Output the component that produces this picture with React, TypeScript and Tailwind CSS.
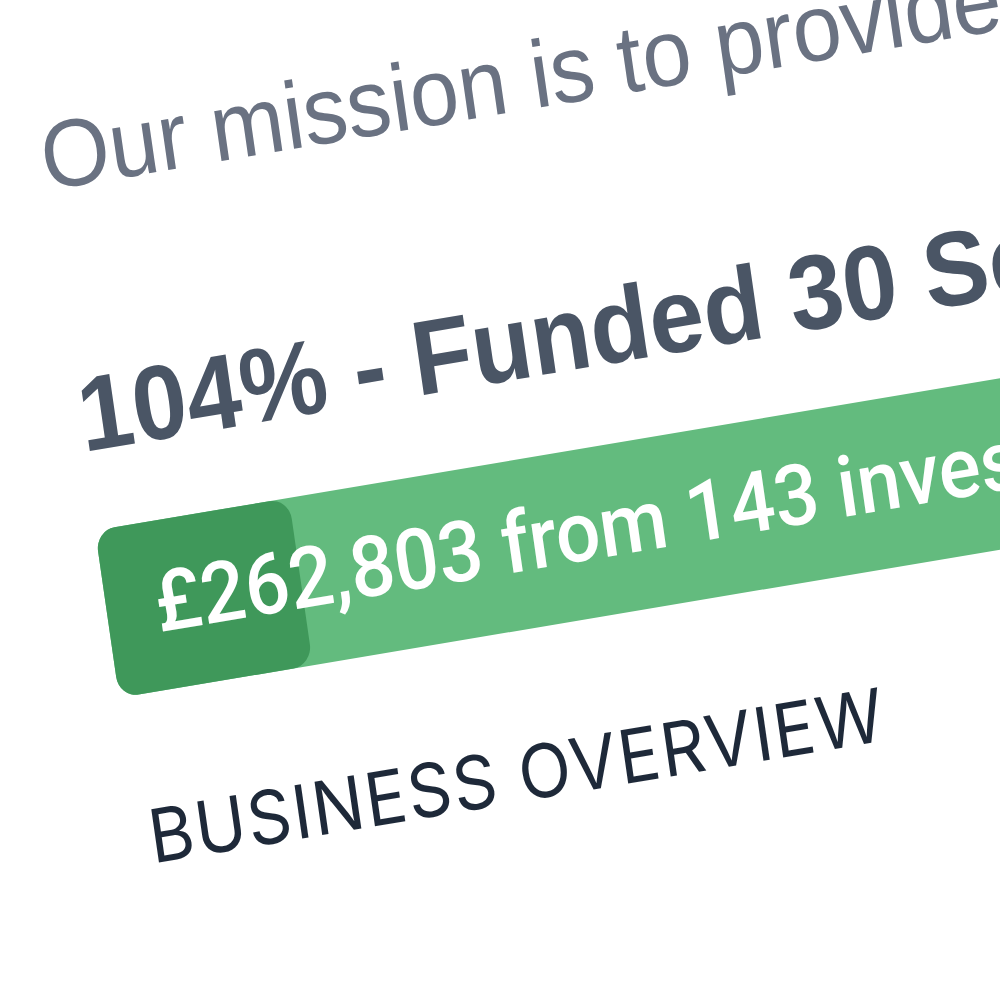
export default function App() {
  return (
    <div className="h-[1000px] w-[1000px] overflow-hidden bg-white">
      <div className="w-[600px] origin-top-left font-['Liberation_Sans',Arial,sans-serif] [transform:translate(31px,86px)_scale(1,1.08)_rotate(-8.85deg)_scale(4.9)]">
        <p className="whitespace-nowrap text-lg leading-7 text-gray-500">
          Our mission is to provide smart funding for growing businesses.
        </p>

        <h2 className="mt-[21px] whitespace-nowrap text-xl font-bold leading-7 text-gray-600">
          104% - Funded 30 Sep 2021
        </h2>

        <div className="relative mt-2 flex h-8 items-center rounded bg-[#63bb7e] px-2.5">
          <div className="absolute inset-y-0 left-0 w-10 rounded bg-[#3f985a]" />
          <span className="relative whitespace-nowrap font-['Roboto',sans-serif] text-base font-medium leading-6 text-white">
            £262,803 from 143 investors
          </span>
        </div>

        <h3 className="mt-[17px] whitespace-nowrap pl-0.5 font-['Inter',sans-serif] text-sm uppercase leading-5 tracking-wide text-gray-800">
          Business Overview
        </h3>
      </div>
    </div>
  );
}
